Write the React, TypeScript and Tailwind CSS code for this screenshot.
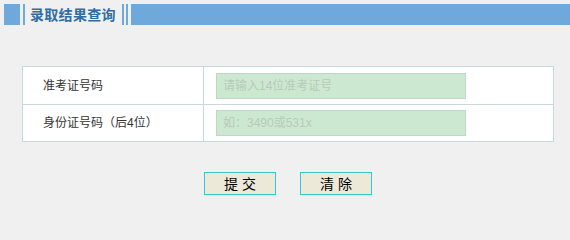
const rows = [
  { label: "准考证号码", placeholder: "请输入14位准考证号" },
  { label: "身份证号码（后4位）", placeholder: "如：3490或531x" },
];

const App = () => {
  return (
    <div
      className="min-h-screen bg-[#f0f0f0] pt-[4px]"
      style={{ fontFamily: '"Liberation Sans", "Noto Sans CJK SC", sans-serif' }}
    >
      {/* Title bar */}
      <div className="flex items-stretch h-[21px]">
        <div className="ml-[4px] w-[16px] bg-[#6fa9dc]" />
        <div className="ml-[3px] w-[2px] bg-[#6fa9dc]" />
        <div className="ml-[5px] flex items-center text-[14px] font-bold leading-none tracking-[0.3px] text-[#2f6da3]">
          录取结果查询
        </div>
        <div className="ml-[6px] w-[2px] bg-[#6fa9dc]" />
        <div className="ml-[2px] w-[2px] bg-[#6fa9dc]" />
        <div className="ml-[3px] flex-1 bg-[#6fa9dc]" />
      </div>

      {/* Form table */}
      <div className="mt-[41px] ml-[22px] w-[532px] border border-[#c9d9d9] bg-white">
        {rows.map((row, i) => (
          <div
            key={row.label}
            className={`flex h-[37px] ${i > 0 ? "border-t border-[#c9d9d9]" : ""}`}
          >
            <div className="w-[181px] border-r border-[#c9d9d9] flex items-center pl-[20px] text-[12px] text-[#333]">
              {row.label}
            </div>
            <div className="flex items-center pl-[12px]">
              <input
                className="w-[250px] h-[26px] bg-[#cde8d1] border border-[#bcd9c4] px-[6px] text-[12px] outline-none placeholder:text-[#b5cbb9]"
                placeholder={row.placeholder}
              />
            </div>
          </div>
        ))}
      </div>

      {/* Buttons */}
      <div className="mt-[30px] flex justify-center gap-[24px] pl-[6px]">
        <button className="w-[72px] h-[23px] bg-[#ece9d8] border border-[#3fc3d0] text-[14px] text-black leading-none">
          提 交
        </button>
        <button className="w-[72px] h-[23px] bg-[#ece9d8] border border-[#3fc3d0] text-[14px] text-black leading-none">
          清 除
        </button>
      </div>
    </div>
  );
};

export default App;
